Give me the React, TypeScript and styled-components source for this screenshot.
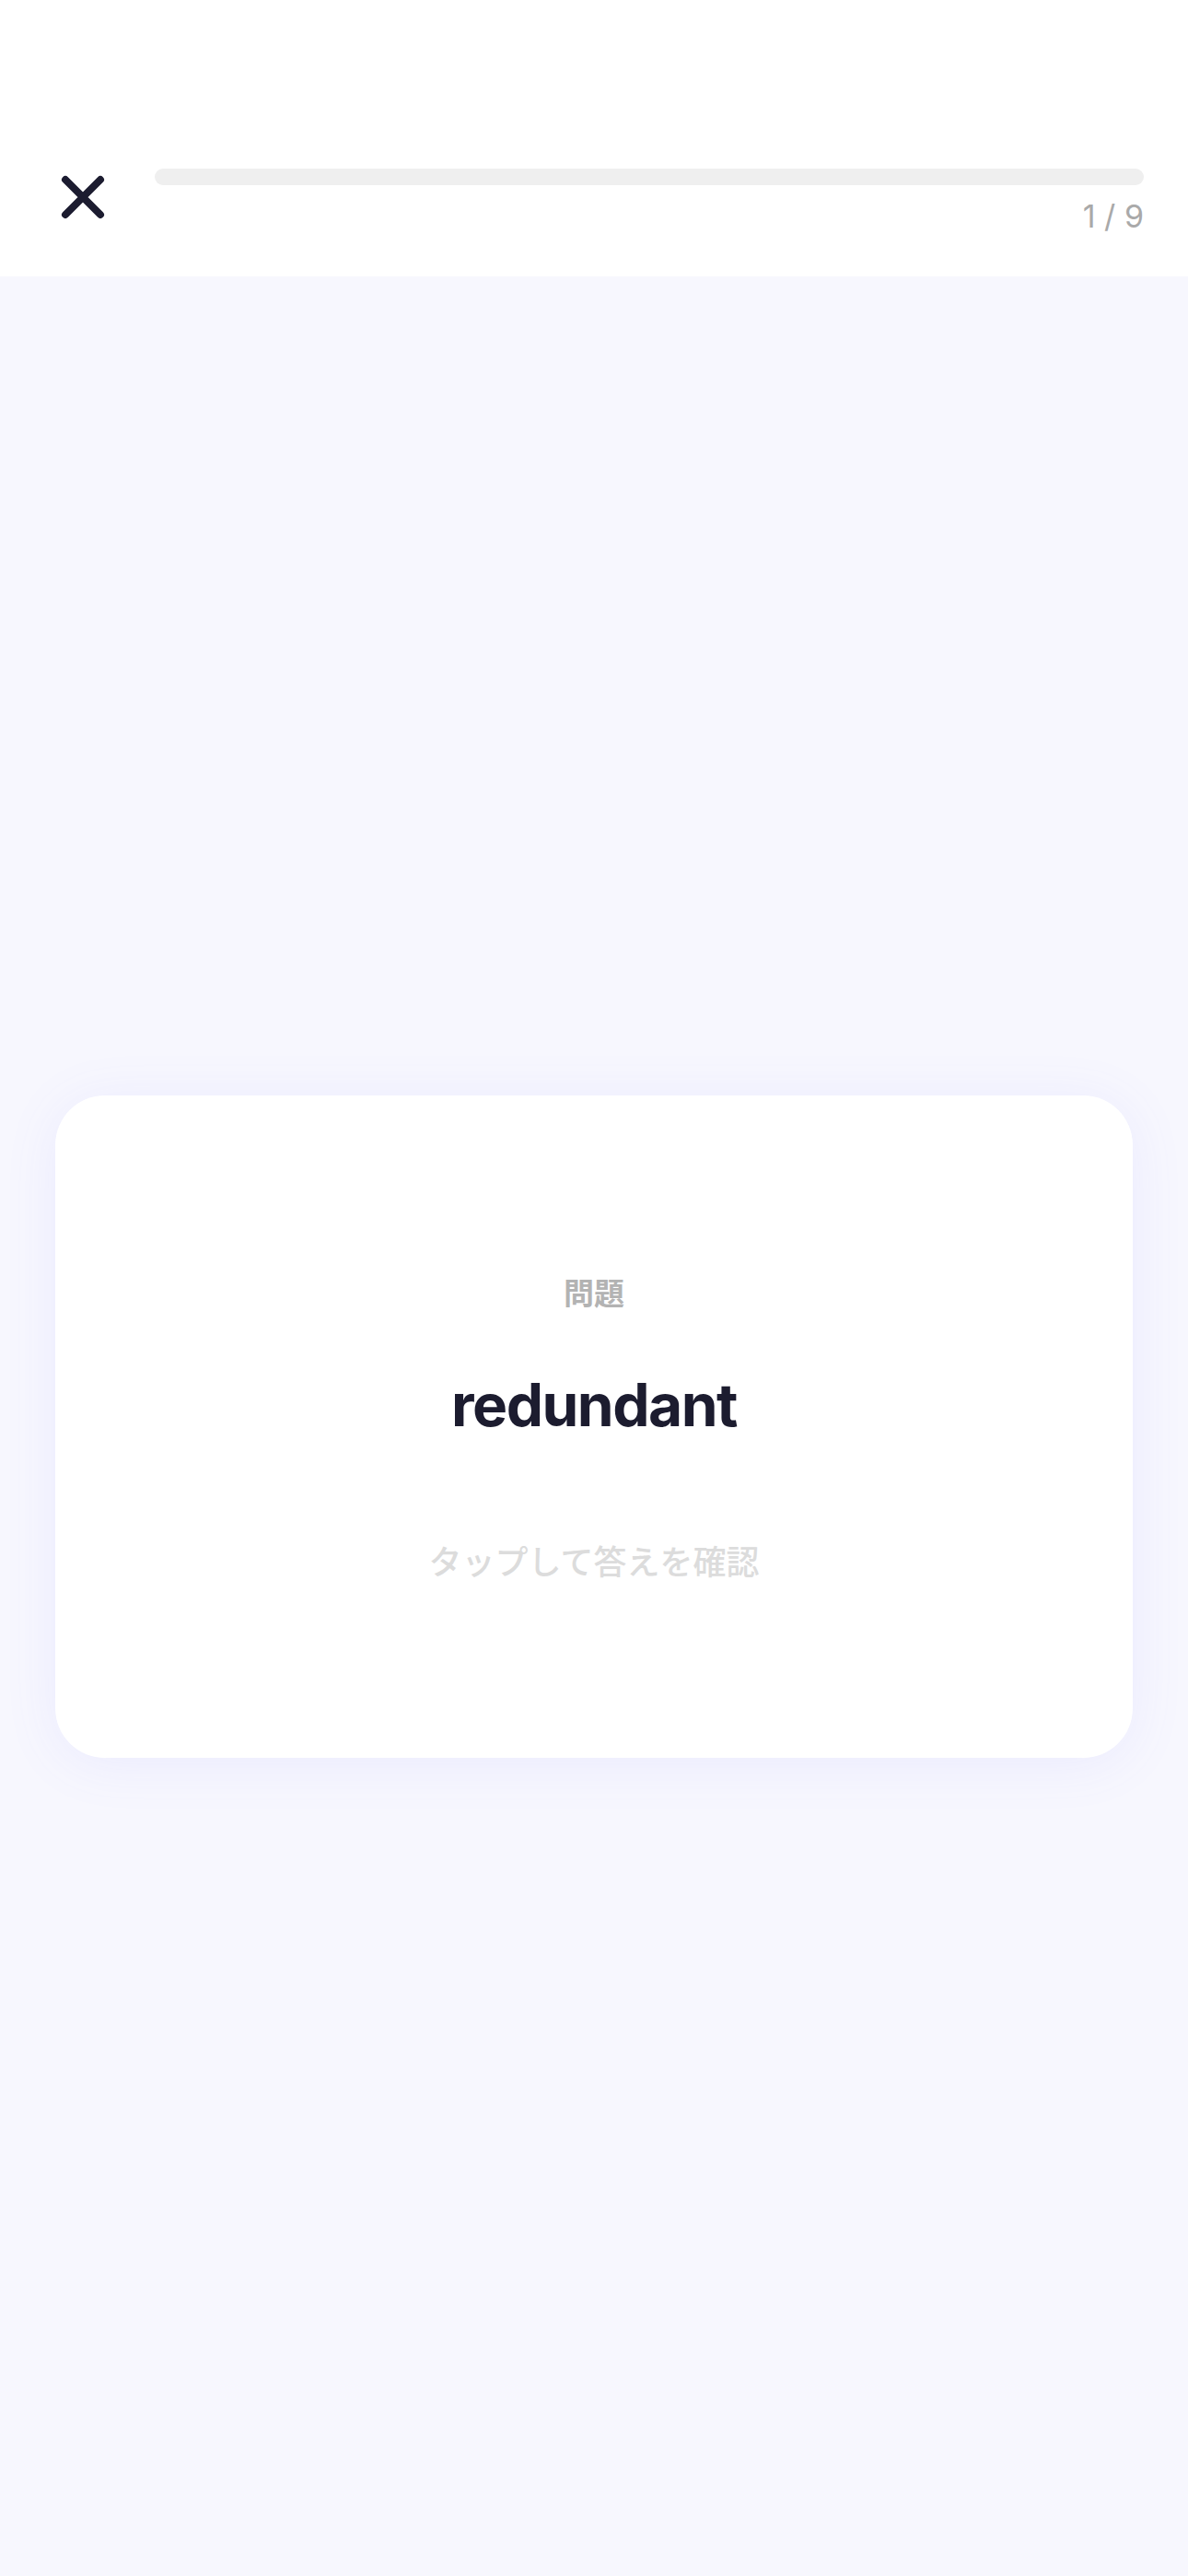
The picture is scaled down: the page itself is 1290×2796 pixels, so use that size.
import React from "react";
import styled, { createGlobalStyle } from "styled-components";

const GlobalStyle = createGlobalStyle`
  html, body {
    margin: 0;
    padding: 0;
    background: #f7f7fe;
  }
  body {
    font-family: Inter, "Noto Sans CJK JP", sans-serif;
  }
  * { box-sizing: border-box; }
`;

const Screen = styled.div`
  width: 1290px;
  height: 2796px;
  display: flex;
  flex-direction: column;
  background: #f7f7fe;
`;

const Header = styled.header`
  height: 300px;
  background: #ffffff;
  display: flex;
  align-items: flex-start;
  padding: 184px 48px 0 60px;
`;

const CloseButton = styled.button`
  width: 60px;
  height: 60px;
  padding: 0;
  border: none;
  background: transparent;
  display: flex;
  align-items: center;
  justify-content: center;
  flex-shrink: 0;
  cursor: pointer;
`;

const ProgressColumn = styled.div`
  flex: 1;
  margin-left: 48px;
  margin-top: -1px;
  display: flex;
  flex-direction: column;
  align-items: flex-end;
`;

const Track = styled.div`
  width: 100%;
  height: 18px;
  border-radius: 9px;
  background: #efefef;
  overflow: hidden;
`;

const Fill = styled.div`
  height: 100%;
  background: #efefef;
  border-radius: 9px;
`;

const Count = styled.span`
  margin-top: 13px;
  font-family: Inter, sans-serif;
  font-size: 34px;
  line-height: 1.21;
  color: #a9a9a9;
  font-weight: 400;
`;

const Body = styled.main`
  flex: 1;
  display: flex;
  align-items: center;
  justify-content: center;
  padding: 0 60px;
`;

const Card = styled.div`
  width: 100%;
  height: 719px;
  background: #ffffff;
  border-radius: 54px;
  box-shadow: 0 6px 60px rgba(110, 110, 255, 0.09);
  display: flex;
  flex-direction: column;
  align-items: center;
  justify-content: center;
  cursor: pointer;
`;

const Label = styled.div`
  font-family: "Noto Sans CJK JP", sans-serif;
  font-size: 33px;
  line-height: 40px;
  font-weight: 700;
  color: #b3b3b3;
`;

const Word = styled.div`
  margin-top: 65px;
  font-family: Inter, sans-serif;
  font-size: 64px;
  line-height: 76px;
  font-weight: 700;
  color: #1c1c2f;
  letter-spacing: -1.5px;
`;

const Hint = styled.div`
  margin-top: 108px;
  font-family: "Noto Sans CJK JP", sans-serif;
  font-size: 36px;
  line-height: 44px;
  font-weight: 500;
  color: #dcdcdc;
`;

const CloseIcon = () => (
  <svg width="60" height="60" viewBox="0 0 60 60" fill="none">
    <path
      d="M11 11 L49 49 M49 11 L11 49"
      stroke="#1c1c30"
      strokeWidth="8"
      strokeLinecap="round"
    />
  </svg>
);

export default function App() {
  const current = 1;
  const total = 9;
  const progress = 0;
  return (
    <>
      <GlobalStyle />
      <Screen>
        <Header>
          <CloseButton aria-label="閉じる">
            <CloseIcon />
          </CloseButton>
          <ProgressColumn>
            <Track>
              <Fill style={{ width: `${progress * 100}%` }} />
            </Track>
            <Count>
              {current} / {total}
            </Count>
          </ProgressColumn>
        </Header>
        <Body>
          <Card>
            <Label>問題</Label>
            <Word>redundant</Word>
            <Hint>タップして答えを確認</Hint>
          </Card>
        </Body>
      </Screen>
    </>
  );
}
